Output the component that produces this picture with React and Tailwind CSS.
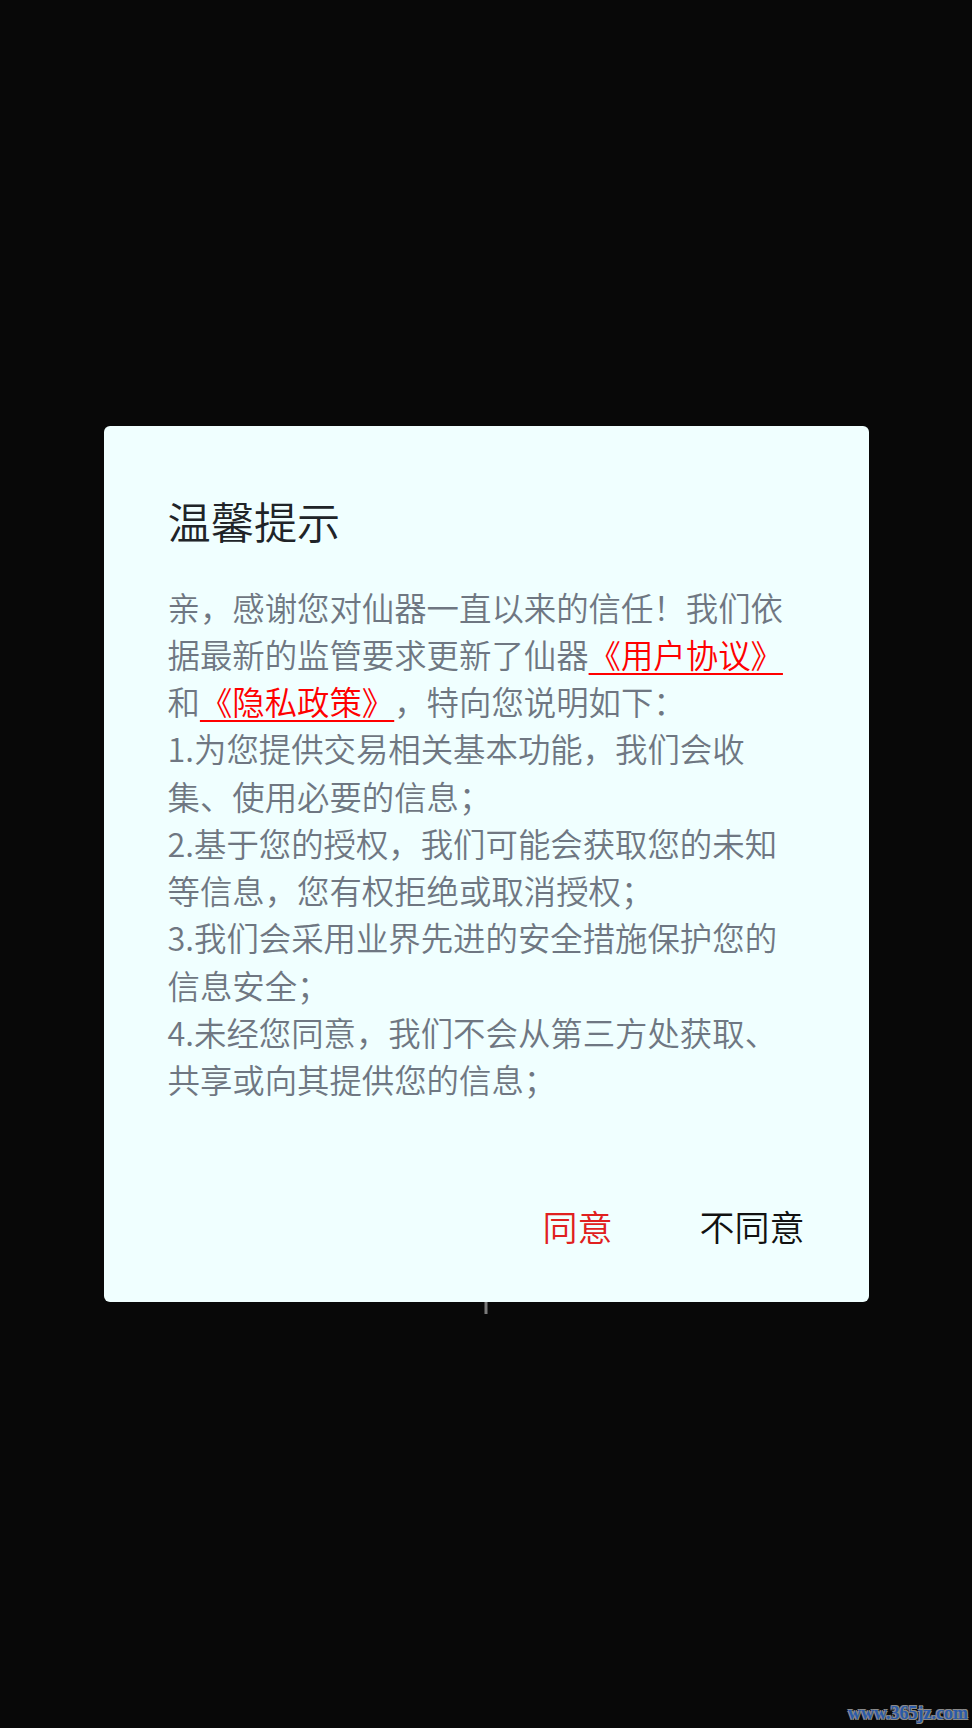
import React from 'react'

const cjk = '"Noto Sans CJK SC", "Noto Sans", sans-serif'

const PrivacyDialog = () => {
  return (
    <div className="relative w-[765px] rounded-[6px] bg-[#f0ffff] pl-[64px] pr-[64px] pt-[64px] pb-[46px]">
      {/* Title */}
      <h2 className="text-[43.2px] font-[350] leading-[60px] text-[#202428]">温馨提示</h2>

      {/* Body */}
      <p className="mt-[33px] w-[632px] text-[32.4px] font-[350] leading-[47.2px] text-[#6f7782] [text-spacing-trim:space-all]">
        亲，感谢您对仙器一直以来的信任！我们依据最新的监管要求更新了仙器
        <a className="text-[#ff0000] underline decoration-[2px] underline-offset-[5px]">《用户协议》</a>
        和
        <a className="text-[#ff0000] underline decoration-[2px] underline-offset-[5px]">《隐私政策》</a>
        ，特向您说明如下：
        <br />
        1.为您提供交易相关基本功能，我们会收集、使用必要的信息；
        <br />
        2.基于您的授权，我们可能会获取您的未知等信息，您有权拒绝或取消授权；
        <br />
        3.我们会采用业界先进的安全措施保护您的信息安全；
        <br />
        4.未经您同意，我们不会从第三方处获取、共享或向其提供您的信息；
      </p>

      {/* Actions */}
      <div className="mt-[94px] flex justify-end gap-[87px] text-[35px] font-[350] leading-[60px]">
        <button className="text-[#e02020]">同意</button>
        <button className="text-[#111111]">不同意</button>
      </div>

      {/* little tick peeking out below */}
      <div className="absolute left-1/2 top-full h-[12px] w-[3px] -translate-x-1/2 bg-[#7a7a7a]" />
    </div>
  )
}

export default function App() {
  return (
    <div
      className="relative flex h-[1728px] w-full items-center justify-center bg-[#080808]"
      style={{ fontFamily: cjk }}
    >
      <PrivacyDialog />

      <span
        className="absolute bottom-[6px] right-[4px] text-[18px] font-bold leading-none text-[#2a5aa8] [text-shadow:1px_1px_0_#8a8a8a,-1px_-1px_0_#8a8a8a,1px_-1px_0_#8a8a8a,-1px_1px_0_#8a8a8a]"
        style={{ fontFamily: '"Liberation Serif", serif' }}
      >
        www.365jz.com
      </span>
    </div>
  )
}
